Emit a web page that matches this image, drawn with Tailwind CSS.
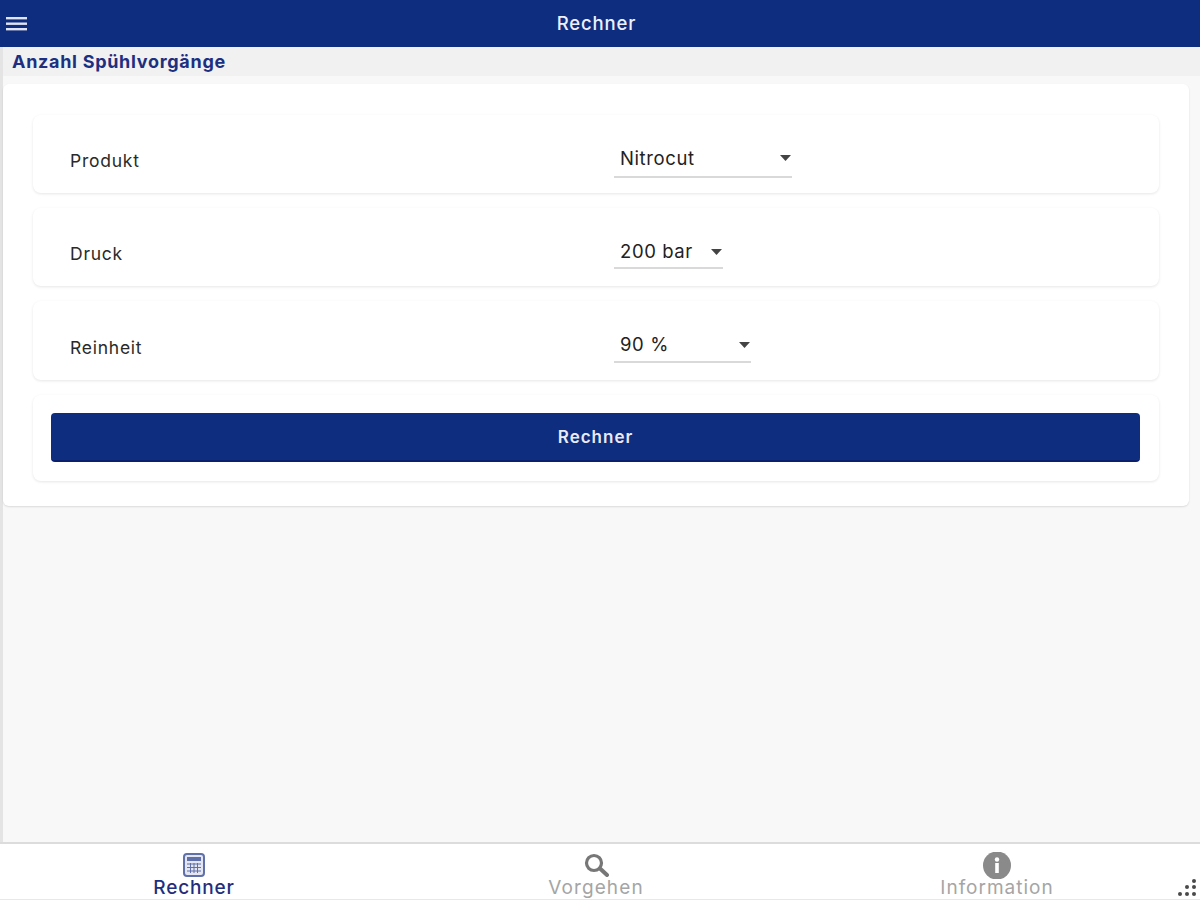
<!DOCTYPE html>
<html lang="de">
  <head>
    <meta charset="UTF-8" />
    <title>Rechner</title>
    <script src="https://cdn.jsdelivr.net/npm/@tailwindcss/browser@4"></script>
  </head>
  <body class="h-[900px] w-[1200px] overflow-hidden bg-[#f8f8f8] font-['Inter',sans-serif] flex flex-col">
    <header class="relative h-[47px] shrink-0 bg-[#0f2d7f] flex items-center justify-center">
      <svg class="absolute left-[6px] top-[17px]" width="21" height="14" viewBox="0 0 21 14" fill="#dfe3f2">
        <rect y="0" width="21" height="2.400" />
        <rect y="5.500" width="21" height="2.400" />
        <rect y="11" width="21" height="2.400" />
      </svg>
      <span class="text-[18.500px] tracking-[0.85px] font-medium text-[#eef0f7] ml-[-7px]">Rechner</span>
    </header>

    <div class="h-[29px] shrink-0 border-l-[3px] border-[#e4e4e4] bg-[#f1f1f1] pl-[9px] pt-[3px] text-[18px] tracking-[0.7px] leading-[24px] font-bold text-[#1d2f80]">Anzahl Spühlvorgänge</div>

    <main class="flex-1 border-l-[3px] border-[#e4e4e4] pt-[8px] pr-[11px]">
      <div class="h-[422px] bg-white rounded-md shadow-[0_1px_2px_rgba(0,0,0,0.12)] pl-[30px] pr-[30px] pt-[31px] flex flex-col gap-[15px]">
        <div class="h-[78px] rounded-lg bg-white shadow-[0_1px_3px_rgba(0,0,0,0.1)] flex">
          <div class="w-[581px] pl-[37px] pt-[35px] text-[17.500px] tracking-[0.75px] leading-[22px] text-[#2a2a2a]">Produkt</div>
          <div class="pt-[31px]">
            <div class="w-[178px] h-[32px] border-b-2 border-[#d9d9d9] pl-[6px] flex justify-between text-[18.500px] tracking-[0.6px] leading-[24px] text-[#222]">
              <span>Nitrocut</span>
              <svg class="mt-[9px] mr-[1px]" width="11" height="6" viewBox="0 0 11 6" fill="#444"><path d="M0 0h11L5.500 6z" /></svg>
            </div>
          </div>
        </div>

        <div class="h-[78px] rounded-lg bg-white shadow-[0_1px_3px_rgba(0,0,0,0.1)] flex">
          <div class="w-[581px] pl-[37px] pt-[35px] text-[17.500px] tracking-[0.75px] leading-[22px] text-[#2a2a2a]">Druck</div>
          <div class="pt-[31px]">
            <div class="w-[109px] h-[30px] border-b-2 border-[#d9d9d9] pl-[6px] flex justify-between text-[18.500px] tracking-[0.6px] leading-[24px] text-[#222]">
              <span>200 bar</span>
              <svg class="mt-[10px] mr-[1px]" width="11" height="6" viewBox="0 0 11 6" fill="#444"><path d="M0 0h11L5.500 6z" /></svg>
            </div>
          </div>
        </div>

        <div class="h-[79px] rounded-lg bg-white shadow-[0_1px_3px_rgba(0,0,0,0.1)] flex">
          <div class="w-[581px] pl-[37px] pt-[36px] text-[17.500px] tracking-[0.75px] leading-[22px] text-[#2a2a2a]">Reinheit</div>
          <div class="pt-[31px]">
            <div class="w-[137px] h-[31px] border-b-2 border-[#d9d9d9] pl-[6px] flex justify-between text-[18.500px] tracking-[0.6px] leading-[24px] text-[#222]">
              <span>90 %</span>
              <svg class="mt-[10px] mr-[1px]" width="11" height="6" viewBox="0 0 11 6" fill="#444"><path d="M0 0h11L5.500 6z" /></svg>
            </div>
          </div>
        </div>

        <div class="h-[86px] rounded-lg bg-white shadow-[0_1px_3px_rgba(0,0,0,0.1)] pl-[18px] pr-[19px] pt-[18px]">
          <button class="w-full h-[49px] pt-[3px] rounded-[4px] bg-[#0f2d7f] border-b-2 border-[#0a1f6e] text-[17px] tracking-[1px] font-semibold text-[#e8eaf4]">Rechner</button>
        </div>
      </div>
    </main>

    <nav class="relative h-[58px] shrink-0 bg-white border-t-2 border-b border-t-[#dcdcdc] border-b-[#e8e8e8] grid grid-cols-3">
      <div class="flex flex-col items-center pt-[9px] ml-[-6px] mr-[6px]">
        <svg width="22" height="24" viewBox="0 0 22 24" fill="none" stroke="#5f70aa">
          <rect x="1" y="1" width="20" height="22" rx="3" stroke-width="2" fill="#e4e7f2" />
          <rect x="4" y="4" width="14" height="4" fill="#5f70aa" stroke="none" />
          <path d="M4 11h14M4 14.500h14M4 18h14M7.500 10v10M11 10v10M14.500 10v10" stroke-width="1" />
        </svg>
        <span class="text-[19px] tracking-[0.85px] leading-[22px] font-medium text-[#1d2f80]">Rechner</span>
      </div>
      <div class="flex flex-col items-center pt-[9px] ml-[-4px] mr-[4px]">
        <svg width="26" height="24" viewBox="0 0 26 24" fill="none" stroke="#777">
          <circle cx="11" cy="10" r="7.500" stroke-width="3.200" />
          <path d="M17 15.500l7 6.500" stroke-width="4" stroke-linecap="round" />
        </svg>
        <span class="text-[19px] tracking-[1.1px] leading-[22px] text-[#a5a5a5]">Vorgehen</span>
      </div>
      <div class="flex flex-col items-center pt-[9px] ml-[-3px] mr-[3px]">
        <svg width="30" height="27" viewBox="0 0 30 27" class="mt-[-1px] mb-[-2px]">
          <circle cx="15" cy="13.500" r="14" fill="#8a8a8a" />
          <rect x="13.200" y="11" width="3.600" height="10" fill="#fff" />
          <circle cx="15" cy="7.500" r="2.200" fill="#fff" />
        </svg>
        <span class="text-[19px] tracking-[1px] leading-[22px] text-[#a5a5a5]">Information</span>
      </div>
      <svg class="absolute right-[2px] bottom-[1px]" width="24" height="20" viewBox="0 0 24 20" fill="#4a4a4a">
        <circle cx="20" cy="3" r="2" />
        <circle cx="13" cy="9" r="2" />
        <circle cx="20" cy="9" r="2" />
        <circle cx="6" cy="16" r="2" />
        <circle cx="13" cy="16" r="2" />
        <circle cx="20" cy="16" r="2" />
      </svg>
    </nav>
  </body>
</html>
